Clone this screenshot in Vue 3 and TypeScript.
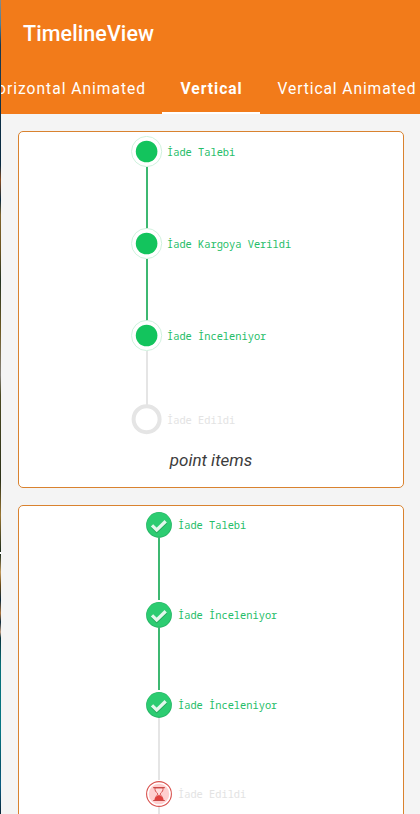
<script setup lang="ts">
type StepState = 'done' | 'idle' | 'waiting'

interface Step {
  label: string
  state: StepState
}

const pointSteps: Step[] = [
  { label: 'İade Talebi', state: 'done' },
  { label: 'İade Kargoya Verildi', state: 'done' },
  { label: 'İade İnceleniyor', state: 'done' },
  { label: 'İade Edildi', state: 'idle' },
]

const iconSteps: Step[] = [
  { label: 'İade Talebi', state: 'done' },
  { label: 'İade İnceleniyor', state: 'done' },
  { label: 'İade İnceleniyor', state: 'done' },
  { label: 'İade Edildi', state: 'waiting' },
]
</script>

<template>
  <div class="screen">
    <div class="edge"></div>
    <div class="page">
      <header class="bar">
        <h1 class="title">TimelineView</h1>
        <nav class="tabs">
          <span class="tab first">Horizontal Animated</span>
          <span class="tab active">Vertical</span>
          <span class="tab last">Vertical Animated</span>
        </nav>
      </header>

      <main class="content">
        <section class="card points">
          <div v-for="(step, i) in pointSteps" :key="i" class="step" :class="step.state">
            <div class="rail">
              <svg v-if="step.state === 'done'" class="point" viewBox="0 0 32 32">
                <circle cx="15.6" cy="15.5" r="15.1" fill="#fff" stroke="#d0f2de" stroke-width="1" />
                <circle cx="15.6" cy="15.5" r="10.8" fill="#13c45d" />
              </svg>
              <svg v-else class="point" viewBox="0 0 32 32">
                <circle cx="15.6" cy="15.2" r="13" fill="#fff" stroke="#e5e5e5" stroke-width="4" />
              </svg>
              <div
                v-if="i < pointSteps.length - 1"
                class="line"
                :class="{ pale: pointSteps[i + 1].state !== 'done' }"
              ></div>
            </div>
            <span class="label">{{ step.label }}</span>
          </div>
          <p class="caption">point items</p>
        </section>

        <section class="card icons">
          <div v-for="(step, i) in iconSteps" :key="i" class="step" :class="step.state">
            <div class="rail">
              <svg v-if="step.state === 'done'" class="icon" viewBox="0 0 26 26">
                <circle cx="13" cy="13" r="12.9" fill="#27b566" />
                <circle cx="13" cy="12.6" r="12.2" fill="#2ccc71" />
                <path d="M6.2 14.6 10.7 19.2 20 10.4" fill="none" stroke="#22a95c" stroke-width="3.3" />
                <path d="M6 13.4 10.7 18 19.7 9.2" fill="none" stroke="#e2f8eb" stroke-width="3.3" />
              </svg>
              <svg v-else class="icon" viewBox="0 0 26 26">
                <circle cx="13" cy="13" r="12.4" fill="#fff" stroke="#d9534f" stroke-width="1.1" />
                <circle cx="13" cy="13" r="10.3" fill="#ffcfcf" />
                <path
                  d="M9 6.8H17V8.4C17 11 14.2 11.8 14.2 13.1S17 15.5 17 18.7H9C9 15.5 11.8 14.4 11.8 13.1S9 11 9 8.4Z"
                  fill="#ffdede"
                  stroke="#d65350"
                  stroke-width="1"
                />
                <path d="M8.6 19.3C8.6 16.5 11.3 14.6 13 14.1 14.7 14.6 17.4 16.5 17.4 19.3Z" fill="#e0413e" />
                <path d="M7.2 6.6H18.8M7.2 19.5H18.8" stroke="#c94a47" stroke-width="1.2" />
              </svg>
              <div
                class="line"
                :class="{ pale: i === iconSteps.length - 1 || iconSteps[i + 1].state !== 'done' }"
              ></div>
            </div>
            <span class="label">{{ step.label }}</span>
          </div>
        </section>
      </main>
    </div>
  </div>
</template>

<style>
body {
  margin: 0;
  overflow: hidden;
}
</style>

<style scoped>
.screen {
  display: flex;
  width: 420px;
  height: 814px;
  overflow: hidden;
  background: #f4f4f4;
}
.edge {
  flex: 0 0 1px;
  background: linear-gradient(
    #8a8a86 0, #4b7f9c 24px, #17384f 45px, #183a50 75px, #0d3047 110px, #092a40 165px,
    #8b4c1e 180px, #0b2b40 200px, #80642c 215px, #6b5420 250px, #253524 280px, #6e5a22 330px,
    #85817a 375px, #4c4a22 395px, #2c3118 480px, #9a7632 515px, #1c2d1c 552px, #fff 552px,
    #fff 554px, #1c2d1c 554px, #c39a5c 572px, #6b4a16 585px, #0b2a3c 600px, #b1763c 613px,
    #0b2a3c 622px, #c7a184 632px, #08343f 638px, #087078 665px, #077785 730px, #07566b 765px,
    #0b5d83 785px, #082538 814px
  );
}
.page {
  flex: 1;
  min-width: 0;
  display: flex;
  flex-direction: column;
}
.bar {
  flex: 0 0 114px;
  display: flex;
  flex-direction: column;
  box-sizing: border-box;
  background: #f27b1a;
  color: #fff;
  font-family: Roboto, sans-serif;
}
.title {
  margin: 0;
  padding-left: 22px;
  height: 66px;
  line-height: 67px;
  font-size: 21.5px;
  font-weight: 500;
  letter-spacing: 0.08px;
}
.tabs {
  flex: 1;
  display: flex;
  overflow: hidden;
  font-size: 15.6px;
  line-height: 46px;
  letter-spacing: 0.98px;
  white-space: nowrap;
}
.tab {
  box-sizing: border-box;
  flex: none;
}
.first {
  width: 161px;
  display: flex;
  justify-content: flex-end;
  padding-right: 16px;
}
.active {
  width: 98px;
  padding-left: 18.5px;
  font-weight: 700;
  border-bottom: 2px solid #fff;
}
.last {
  padding-left: 17.5px;
  letter-spacing: 0.9px;
}
.content {
  flex: 1;
  min-height: 0;
  display: flex;
  flex-direction: column;
  gap: 17px;
  padding: 17px 16px 0 17px;
}
.card {
  box-sizing: border-box;
  flex: none;
  background: #fff;
  border: 1px solid #d9822f;
  border-radius: 5px;
}
.points {
  height: 357px;
  padding: 4px 0 0 112px;
}
.icons {
  height: 400px;
  padding: 6px 0 0 127px;
}
.step {
  display: flex;
  align-items: flex-start;
  color: #25bd68;
}
.step.idle,
.step.waiting {
  color: #e3e3e3;
}
.rail {
  display: flex;
  flex-direction: column;
  align-items: center;
}
.point,
.icon {
  display: block;
  flex: none;
}
.point {
  width: 32px;
  height: 32px;
}
.icon {
  width: 26px;
  height: 26px;
}
.line {
  width: 2px;
  background: #3db871;
}
.line.pale {
  background: #e5e5e5;
}
.points .line {
  height: 62px;
  margin: -1px 0;
}
.points .line.pale {
  height: 53.5px;
}
.icons .line {
  height: 62px;
  margin-bottom: 1.85px;
}
.icons .line.pale {
  margin-bottom: 1px;
}
.label {
  font-family: 'Droid Sans Mono', 'Noto Sans Mono', 'DejaVu Sans Mono', monospace;
  font-size: 10.35px;
  white-space: pre;
}
.points .label {
  margin-left: 4px;
  line-height: 33px;
}
.icons .label {
  margin-left: 6px;
  line-height: 27px;
}
.caption {
  margin: 11px 0 0 -112px;
  text-align: center;
  font: italic 400 17px/24px Roboto, sans-serif;
  color: #3c3c3c;
}
</style>
